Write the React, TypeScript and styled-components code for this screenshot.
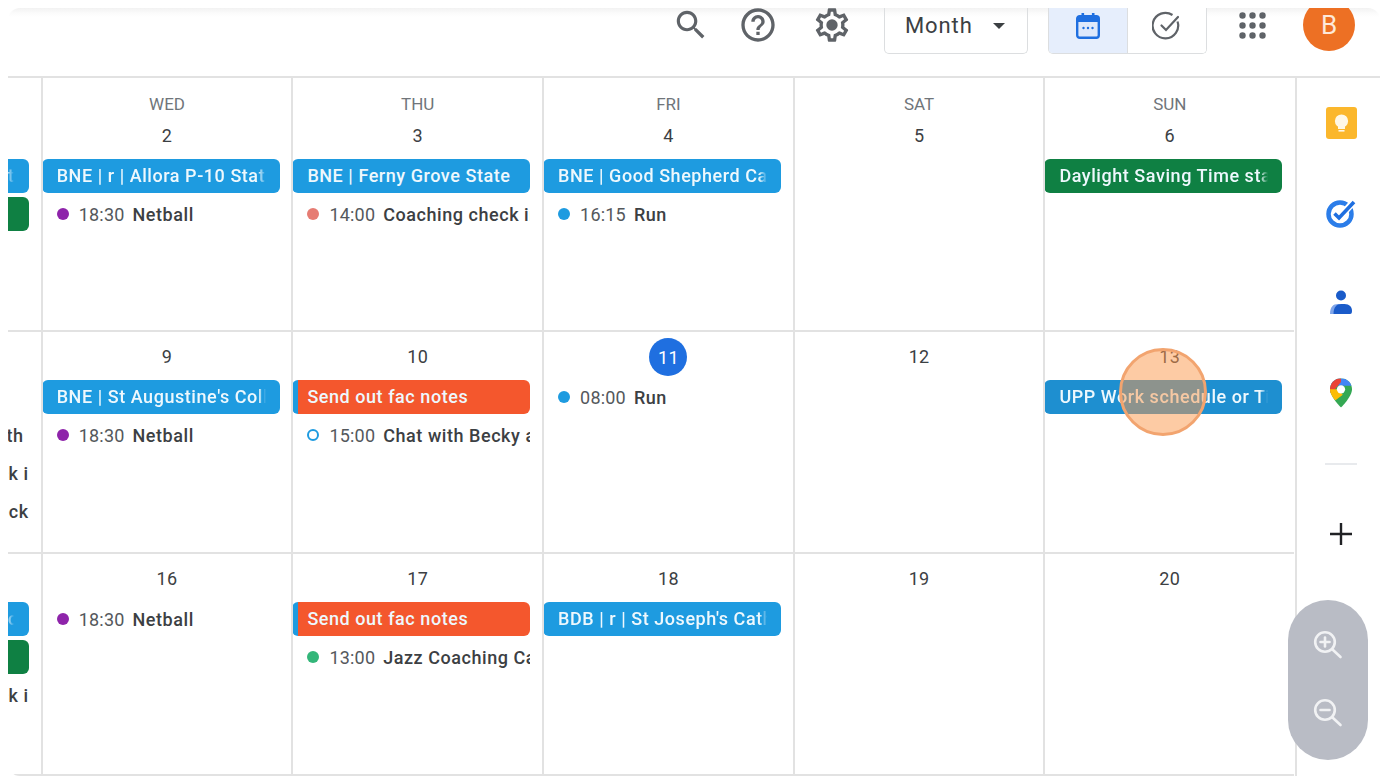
import React from "react";
import styled, { createGlobalStyle } from "styled-components";

const Global = createGlobalStyle`
  html, body { margin: 0; padding: 0; background: #fff; height: 780px; overflow: hidden; }
  * { box-sizing: border-box; }
  body { font-family: Roboto, "Liberation Sans", sans-serif; }
`;

const Page = styled.div`
  position: relative;
  width: 1380px;
  height: 780px;
  padding: 8px 0 4px 8px;
`;
const Frame = styled.div`
  width: 1372px;
  height: 768px;
  border-radius: 12px;
  overflow: hidden;
  background: #fff;
  display: flex;
  flex-direction: column;
`;
const Header = styled.header`
  height: 70px;
  flex: none;
  display: flex;
  justify-content: flex-end;
  align-items: flex-start;
  padding-right: 25px;
  border-bottom: 2px solid #e2e2e2;
  background: linear-gradient(180deg, #f2f2f2 0, #fbfbfb 5px, #fff 9px);
`;
const IconSlot = styled.div<{ $gap: number; $w: number }>`
  flex: none;
  width: ${(p) => p.$w}px;
  height: 34px;
  margin-left: ${(p) => p.$gap}px;
  display: flex;
  align-items: center;
  justify-content: center;
  color: #5f6368;
  svg { flex: none; }
`;
const MonthSelect = styled.div`
  flex: none;
  width: 144px;
  height: 46px;
  margin-left: 32px;
  padding: 0 22px 10px 20px;
  display: flex;
  align-items: center;
  justify-content: space-between;
  border: 1.5px solid #dcdee0;
  border-top: none;
  border-radius: 0 0 5px 5px;
  color: #3c4043;
  font-size: 22px;
  letter-spacing: 0.9px;
`;
const Caret = styled.span`
  width: 0;
  height: 0;
  border-left: 6px solid transparent;
  border-right: 6px solid transparent;
  border-top: 6px solid #3c4043;
`;
const ViewToggle = styled.div`
  flex: none;
  width: 159px;
  height: 46px;
  margin-left: 20px;
  display: flex;
  border: 1.5px solid #dcdee0;
  border-top: none;
  border-radius: 0 0 5px 5px;
  overflow: hidden;
`;
const ToggleCell = styled.div<{ $active?: boolean }>`
  flex: 1;
  display: flex;
  align-items: flex-start;
  justify-content: center;
  padding-top: 3px;
  background: ${(p) => (p.$active ? "#e6eefc" : "#fff")};
  & + & { border-left: 1.5px solid #dcdee0; }
`;
const Avatar = styled.div`
  flex: none;
  width: 52px;
  height: 52px;
  margin: -9px 0 0 37px;
  border-radius: 50%;
  background: #ed7024;
  color: #fde9da;
  font-size: 26px;
  display: flex;
  align-items: center;
  justify-content: center;
`;
const Body = styled.div`
  flex: 1;
  display: flex;
  min-height: 0;
`;
const Grid = styled.div`
  width: 1287px;
  flex: none;
  display: grid;
  grid-template-columns: 32.7px repeat(5, 250.7px);
  grid-template-rows: 254px 222px 222px;
`;
const Cell = styled.div<{ $stub?: boolean }>`
  min-width: 0;
  overflow: hidden;
  border-bottom: 2px solid #e2e2e2;
  border-left: ${(p) => (p.$stub ? "none" : "2px solid #e2e2e2")};
  padding-right: ${(p) => (p.$stub ? "12px" : "13px")};
  display: flex;
  flex-direction: column;
`;
const Weekday = styled.div`
  height: 33px;
  padding-top: 19px;
  line-height: 14px;
  font-size: 17px;
  text-align: center;
  color: #70757a;
  margin-right: -13px;
  flex: none;
`;
const DayNumber = styled.div`
  height: 48px;
  margin-right: -13px;
  flex: none;
  display: flex;
  align-items: center;
  justify-content: center;
  color: #3c4043;
  font-size: 18px;
  letter-spacing: 0.3px;
`;
const Today = styled.span`
  width: 38px;
  height: 38px;
  margin-top: 2px;
  border-radius: 50%;
  background: #1f6fe0;
  color: #fff;
  display: flex;
  align-items: center;
  justify-content: center;
`;
const Events = styled.div<{ $top?: number }>`
  display: flex;
  flex-direction: column;
  gap: 4px;
  padding-top: ${(p) => p.$top ?? 0}px;
`;
const Pill = styled.div<{ $bg: string; $strip?: boolean; $stub?: boolean }>`
  height: 34px;
  flex: none;
  width: ${(p) => (p.$stub ? "100%" : "238px")};
  margin-left: ${(p) => (p.$stub ? "0" : "-1px")};
  border-radius: ${(p) => (p.$stub ? "0 6px 6px 0" : "6px")};
  background: ${(p) => (p.$strip ? `linear-gradient(90deg, #1e9be0 6px, ${p.$bg} 6px)` : p.$bg)};
  color: #eef8fd;
  font-size: 18px;
  font-weight: 500;
  letter-spacing: 0.55px;
  line-height: 34px;
  white-space: nowrap;
  padding: ${(p) => (p.$stub ? "0 15px 0 0" : "0 14px 0 15px")};
  text-align: ${(p) => (p.$stub ? "right" : "left")};
  overflow: hidden;
`;
const FadeText = styled.span<{ $fade?: boolean }>`
  display: block;
  overflow: hidden;
  ${(p) =>
    p.$fade
      ? "mask-image: linear-gradient(90deg, #000 calc(100% - 8px), transparent); -webkit-mask-image: linear-gradient(90deg, #000 calc(100% - 8px), transparent);"
      : ""}
`;
const Timed = styled.div`
  height: 34px;
  flex: none;
  width: 237px;
  padding-left: 14px;
  display: flex;
  align-items: center;
  white-space: nowrap;
  overflow: hidden;
  font-size: 18px;
  color: #3c4043;
`;
const Dot = styled.span<{ $color: string; $hollow?: boolean }>`
  flex: none;
  width: 12px;
  height: 12px;
  border-radius: 50%;
  margin-right: 10px;
  background: ${(p) => (p.$hollow ? "#fff" : p.$color)};
  border: ${(p) => (p.$hollow ? `2px solid ${p.$color}` : "none")};
`;
const Time = styled.span`
  color: #54585c;
  margin-right: 8px;
  letter-spacing: 0.2px;
`;
const Title = styled.span`
  font-weight: 500;
  letter-spacing: 0.55px;
  color: #3c4043;
`;
const FragmentRow = styled.div<{ $inset?: number }>`
  height: 34px;
  flex: none;
  padding: 2px ${(p) => p.$inset ?? 0}px 0 0;
  line-height: 32px;
  display: flex;
  justify-content: flex-end;
  white-space: nowrap;
  overflow: hidden;
  font-size: 18px;
  font-weight: 500;
  letter-spacing: 0.55px;
  color: #3c4043;
`;
const FragmentText = styled.span`
  flex: none;
`;
const EmptySlot = styled.div`
  height: 34px;
  flex: none;
`;
const Side = styled.aside`
  flex: 1;
  border-left: 2px solid #e2e2e2;
  padding-left: 5px;
  display: flex;
  flex-direction: column;
  align-items: center;
`;
const SideSlot = styled.div<{ $lift?: number }>`
  height: 90px;
  flex: none;
  display: flex;
  align-items: center;
  justify-content: center;
  padding-bottom: ${(p) => p.$lift ?? 0}px;
`;
const SideRule = styled.div`
  width: 32px;
  height: 2px;
  margin-top: 25px;
  background: #e8eaed;
  flex: none;
`;
const AddSlot = styled.div`
  margin-top: 49px;
  height: 40px;
  display: flex;
  align-items: center;
  justify-content: center;
`;
const ZoomPill = styled.div`
  position: absolute;
  left: 1288px;
  top: 600px;
  width: 80px;
  height: 160px;
  border-radius: 40px;
  background: #b9bcc5;
  display: flex;
  flex-direction: column;
  align-items: center;
  padding-top: 30px;
  gap: 37.5px;
`;
const Highlight = styled.div`
  position: absolute;
  left: 1119px;
  top: 348px;
  width: 88px;
  height: 88px;
  border-radius: 50%;
  background: rgba(251, 151, 73, 0.5);
  border: 3px solid #f2a46f;
`;

const BLUE = "#1e9be0";
const GREEN = "#0f8043";
const ORANGE = "#f4572d";

type Ev =
  | { k: "pill"; text: string; bg?: string; strip?: boolean; fade?: boolean }
  | { k: "timed"; time: string; title: string; color: string; hollow?: boolean }
  | { k: "frag"; text: string; inset?: number }
  | { k: "empty" };

type Day = { wd?: string; n: string; today?: boolean; ev: Ev[] };

const stub = (ev: Ev[], top: number) => ({ stub: true as const, ev, top });

const PURPLE = "#8e24aa";
const NETBALL: Ev = { k: "timed", time: "18:30", title: "Netball", color: PURPLE };
const RUN = (t: string): Ev => ({ k: "timed", time: t, title: "Run", color: BLUE });

const row1: Day[] = [
  { wd: "WED", n: "2", ev: [{ k: "pill", text: "BNE | r | Allora P-10 State College", fade: true }, NETBALL] },
  { wd: "THU", n: "3", ev: [{ k: "pill", text: "BNE | Ferny Grove State" }, { k: "timed", time: "14:00", title: "Coaching check in", color: "#e67c73" }] },
  { wd: "FRI", n: "4", ev: [{ k: "pill", text: "BNE | Good Shepherd Catholic", fade: true }, RUN("16:15")] },
  { wd: "SAT", n: "5", ev: [] },
  { wd: "SUN", n: "6", ev: [{ k: "pill", text: "Daylight Saving Time starts", bg: GREEN, fade: true }] },
];
const row2: Day[] = [
  { n: "9", ev: [{ k: "pill", text: "BNE | St Augustine's College", fade: true }, NETBALL] },
  { n: "10", ev: [{ k: "pill", text: "Send out fac notes", bg: ORANGE, strip: true }, { k: "timed", time: "15:00", title: "Chat with Becky and", color: BLUE, hollow: true }] },
  { n: "11", today: true, ev: [RUN("08:00")] },
  { n: "12", ev: [] },
  { n: "13", ev: [{ k: "pill", text: "UPP Work schedule or Timetable", bg: "#1e8fd0", fade: true }] },
];
const row3: Day[] = [
  { n: "16", ev: [NETBALL] },
  { n: "17", ev: [{ k: "pill", text: "Send out fac notes", bg: ORANGE, strip: true }, { k: "timed", time: "13:00", title: "Jazz Coaching Call", color: "#33b679" }] },
  { n: "18", ev: [{ k: "pill", text: "BDB | r | St Joseph's Catholic", fade: true }] },
  { n: "19", ev: [] },
  { n: "20", ev: [] },
];

const rows = [
  { stub: stub([{ k: "pill", text: "t", fade: true }, { k: "pill", text: "", bg: GREEN }], 81), days: row1 },
  { stub: stub([{ k: "empty" }, { k: "frag", text: "Month", inset: 5 }, { k: "frag", text: "check i" }, { k: "frag", text: "check" }], 48), days: row2 },
  { stub: stub([{ k: "pill", text: "c", fade: true }, { k: "pill", text: "", bg: GREEN }, { k: "frag", text: "check i" }], 48), days: row3 },
];

function renderEvent(e: Ev, i: number, isStub: boolean) {
  if (e.k === "pill")
    return (
      <Pill key={i} $bg={e.bg ?? BLUE} $strip={e.strip} $stub={isStub}>
        <FadeText $fade={e.fade}>{e.text}</FadeText>
      </Pill>
    );
  if (e.k === "timed")
    return (
      <Timed key={i}>
        <Dot $color={e.color} $hollow={e.hollow} />
        <Time>{e.time}</Time>
        <Title>{e.title}</Title>
      </Timed>
    );
  if (e.k === "frag")
    return (
      <FragmentRow key={i} $inset={e.inset}>
        <FragmentText>{e.text}</FragmentText>
      </FragmentRow>
    );
  return <EmptySlot key={i} />;
}

const SearchIcon = () => (
  <svg width="38" height="38" viewBox="0 0 24 24" fill="#5f6368">
    <path d="M15.5 14h-.79l-.28-.27C15.41 12.59 16 11.11 16 9.5 16 5.91 13.09 3 9.5 3S3 5.91 3 9.5 5.91 16 9.5 16c1.61 0 3.09-.59 4.23-1.57l.27.28v.79l5 4.99L20.49 19l-4.99-5zm-6 0C7.01 14 5 11.99 5 9.5S7.01 5 9.5 5 14 7.01 14 9.5 11.99 14 9.5 14z" />
  </svg>
);
const HelpIcon = () => (
  <svg width="40" height="40" viewBox="0 0 24 24" fill="#5f6368">
    <path d="M11 18h2v-2h-2v2zm1-16C6.48 2 2 6.48 2 12s4.48 10 10 10 10-4.48 10-10S17.52 2 12 2zm0 18c-4.41 0-8-3.59-8-8s3.59-8 8-8 8 3.59 8 8-3.59 8-8 8zm0-14c-2.21 0-4 1.79-4 4h2c0-1.1.9-2 2-2s2 .9 2 2c0 2-3 1.75-3 5h2c0-2.25 3-2.5 3-5 0-2.21-1.79-4-4-4z" />
  </svg>
);
const GearIcon = () => (
  <svg width="40" height="40" viewBox="0 0 24 24" fill="#5f6368">
    <path d="M19.43 12.98c.04-.32.07-.64.07-.98 0-.34-.03-.66-.07-.98l2.11-1.65c.19-.15.24-.42.12-.64l-2-3.46c-.09-.16-.26-.25-.44-.25-.06 0-.12.01-.17.03l-2.49 1c-.52-.4-1.08-.73-1.69-.98l-.38-2.65C14.46 2.18 14.25 2 14 2h-4c-.25 0-.46.18-.49.42l-.38 2.65c-.61.25-1.17.59-1.69.98l-2.49-1c-.06-.02-.12-.03-.18-.03-.17 0-.34.09-.43.25l-2 3.46c-.13.22-.07.49.12.64l2.11 1.65c-.04.32-.07.65-.07.98 0 .33.03.66.07.98l-2.11 1.65c-.19.15-.24.42-.12.64l2 3.46c.09.16.26.25.44.25.06 0 .12-.01.17-.03l2.49-1c.52.4 1.08.73 1.69.98l.38 2.65c.03.24.24.42.49.42h4c.25 0 .46-.18.49-.42l.38-2.65c.61-.25 1.17-.59 1.69-.98l2.49 1c.06.02.12.03.18.03.17 0 .34-.09.43-.25l2-3.46c.12-.22.07-.49-.12-.64l-2.11-1.65zm-1.98-1.71c.04.31.05.52.05.73 0 .21-.02.43-.05.73l-.14 1.13.89.7 1.08.84-.7 1.21-1.27-.51-1.04-.42-.9.68c-.43.32-.84.56-1.25.73l-1.06.43-.16 1.13-.2 1.35h-1.4l-.19-1.35-.16-1.13-1.06-.43c-.43-.18-.83-.41-1.23-.71l-.91-.7-1.06.43-1.27.51-.7-1.21 1.08-.84.89-.7-.14-1.13c-.03-.31-.05-.54-.05-.74s.02-.43.05-.73l.14-1.13-.89-.7-1.08-.84.7-1.21 1.27.51 1.04.42.9-.68c.43-.32.84-.56 1.25-.73l1.06-.43.16-1.13.2-1.35h1.39l.19 1.35.16 1.13 1.06.43c.43.18.83.41 1.23.71l.91.7 1.06-.43 1.27-.51.7 1.21-1.07.85-.89.7.14 1.13z" />
    <circle cx="12" cy="12" r="3.4" />
  </svg>
);
const CalendarIcon = () => (
  <svg width="28" height="30" viewBox="0 0 28 30">
    <rect x="3.2" y="5.2" width="21.6" height="21.6" rx="2.5" fill="#dfe9fb" stroke="#1f6fe0" strokeWidth="2.4" />
    <rect x="3" y="5" width="22" height="6" fill="#1f6fe0" />
    <rect x="7.5" y="2" width="2.6" height="5" fill="#1f6fe0" />
    <rect x="17.9" y="2" width="2.6" height="5" fill="#1f6fe0" />
    <circle cx="9.5" cy="17" r="1.2" fill="#1f6fe0" />
    <circle cx="14" cy="17" r="1.2" fill="#1f6fe0" />
    <circle cx="18.5" cy="17" r="1.2" fill="#1f6fe0" />
  </svg>
);
const TaskIcon = () => (
  <svg width="30" height="30" viewBox="0 0 30 30" fill="none" stroke="#5f6368" strokeWidth="2.2">
    <path d="M25.5 10.500A12.800 12.800 0 1 1 20.500 4" />
    <path d="M9.500 14.500l4.500 4.500L26 6" strokeLinecap="round" />
  </svg>
);
const AppsIcon = () => (
  <svg width="27" height="27" viewBox="0 0 27 27" fill="#5f6368">
    {[3.5, 13.5, 23.5].flatMap((y) =>
      [3.5, 13.5, 23.5].map((x) => <circle key={`${x}-${y}`} cx={x} cy={y} r="3.2" />)
    )}
  </svg>
);
const KeepIcon = () => (
  <svg width="31" height="32" viewBox="0 0 31 32">
    <rect width="31" height="32" rx="3" fill="#fbb72c" />
    <circle cx="15.5" cy="14" r="6.600" fill="#fff8e6" />
    <rect x="12" y="19" width="7" height="3" fill="#fff8e6" />
    <rect x="12.5" y="23" width="6" height="1.600" fill="#fff8e6" />
  </svg>
);
const TasksIcon = () => (
  <svg width="32" height="32" viewBox="0 0 32 32" fill="none">
    <circle cx="15" cy="17" r="11.500" stroke="#2b7de9" strokeWidth="4.500" />
    <path d="M9.500 16.500l4.500 4.500L27 6.500" stroke="#fff" strokeWidth="7" />
    <path d="M9.500 16.500l4.500 4.500L29 5" stroke="#1f6fe0" strokeWidth="3.600" />
  </svg>
);
const PersonIcon = () => (
  <svg width="24" height="30" viewBox="0 0 24 30">
    <path d="M1 28c0-7 3-10 8-10h4v10z" fill="#7fa5ea" />
    <path d="M4.500 28c0-7 3-10 8-10h3c5 0 7.500 3 7.500 7 0 2-.5 3-2 3z" fill="#1a5bc9" />
    <circle cx="12" cy="9.500" r="5" fill="#1a5bc9" />
  </svg>
);
const MapsIcon = () => (
  <svg width="22" height="30" viewBox="0 0 24 32">
    <defs>
      <clipPath id="pinClip">
        <path d="M12 0C5.400 0 0 5.400 0 12c0 8 12 20 12 20s12-12 12-20C24 5.400 18.600 0 12 0z" />
      </clipPath>
    </defs>
    <g clipPath="url(#pinClip)">
      <rect width="24" height="32" fill="#34a853" />
      <polygon points="0,0 24,0 24,8 0,8" fill="#4285f4" />
      <polygon points="0,0 12,0 12,4 2,16 0,16" fill="#ea4335" />
      <polygon points="0,12 8,12 14,18 6,24 0,20" fill="#fbbc04" />
    </g>
    <circle cx="12" cy="12" r="4.500" fill="#fff" />
  </svg>
);
const PlusIcon = () => (
  <svg width="24" height="24" viewBox="0 0 24 24" stroke="#202124" strokeWidth="2.400">
    <path d="M12 1v22M1 12h22" />
  </svg>
);
const ZoomGlyph = ({ plus }: { plus?: boolean }) => (
  <svg width="30" height="30" viewBox="0 0 30 30" fill="none" stroke="#f1f2f4" strokeWidth="2.600" strokeLinecap="round" style={{ flex: "none" }}>
    <circle cx="12" cy="12" r="9.800" />
    <path d="M19.500 19.500l8 7.500" />
    <path d="M7.500 12h9" />
    {plus && <path d="M12 7.500v9" />}
  </svg>
);

export default function App() {
  return (
    <Page>
      <Global />
      <Frame>
        <Header>
          <IconSlot $gap={0} $w={38}><SearchIcon /></IconSlot>
          <IconSlot $gap={28} $w={40}><HelpIcon /></IconSlot>
          <IconSlot $gap={34} $w={40}><GearIcon /></IconSlot>
          <MonthSelect>
            <span>Month</span>
            <Caret />
          </MonthSelect>
          <ViewToggle>
            <ToggleCell $active><CalendarIcon /></ToggleCell>
            <ToggleCell><TaskIcon /></ToggleCell>
          </ViewToggle>
          <IconSlot $gap={32} $w={27}><AppsIcon /></IconSlot>
          <Avatar>B</Avatar>
        </Header>
        <Body>
          <Grid>
            {rows.map((r, ri) => (
              <React.Fragment key={ri}>
                <Cell $stub>
                  <Events $top={r.stub.top}>{r.stub.ev.map((e, i) => renderEvent(e, i, true))}</Events>
                </Cell>
                {r.days.map((d) => (
                  <Cell key={d.n}>
                    {d.wd && <Weekday>{d.wd}</Weekday>}
                    <DayNumber>{d.today ? <Today>{d.n}</Today> : d.n}</DayNumber>
                    <Events>{d.ev.map((e, i) => renderEvent(e, i, false))}</Events>
                  </Cell>
                ))}
              </React.Fragment>
            ))}
          </Grid>
          <Side>
            <SideSlot><KeepIcon /></SideSlot>
            <SideSlot $lift={1}><TasksIcon /></SideSlot>
            <SideSlot $lift={4}><PersonIcon /></SideSlot>
            <SideSlot><MapsIcon /></SideSlot>
            <SideRule />
            <AddSlot><PlusIcon /></AddSlot>
          </Side>
        </Body>
      </Frame>
      <Highlight />
      <ZoomPill>
        <ZoomGlyph plus />
        <ZoomGlyph />
      </ZoomPill>
    </Page>
  );
}
